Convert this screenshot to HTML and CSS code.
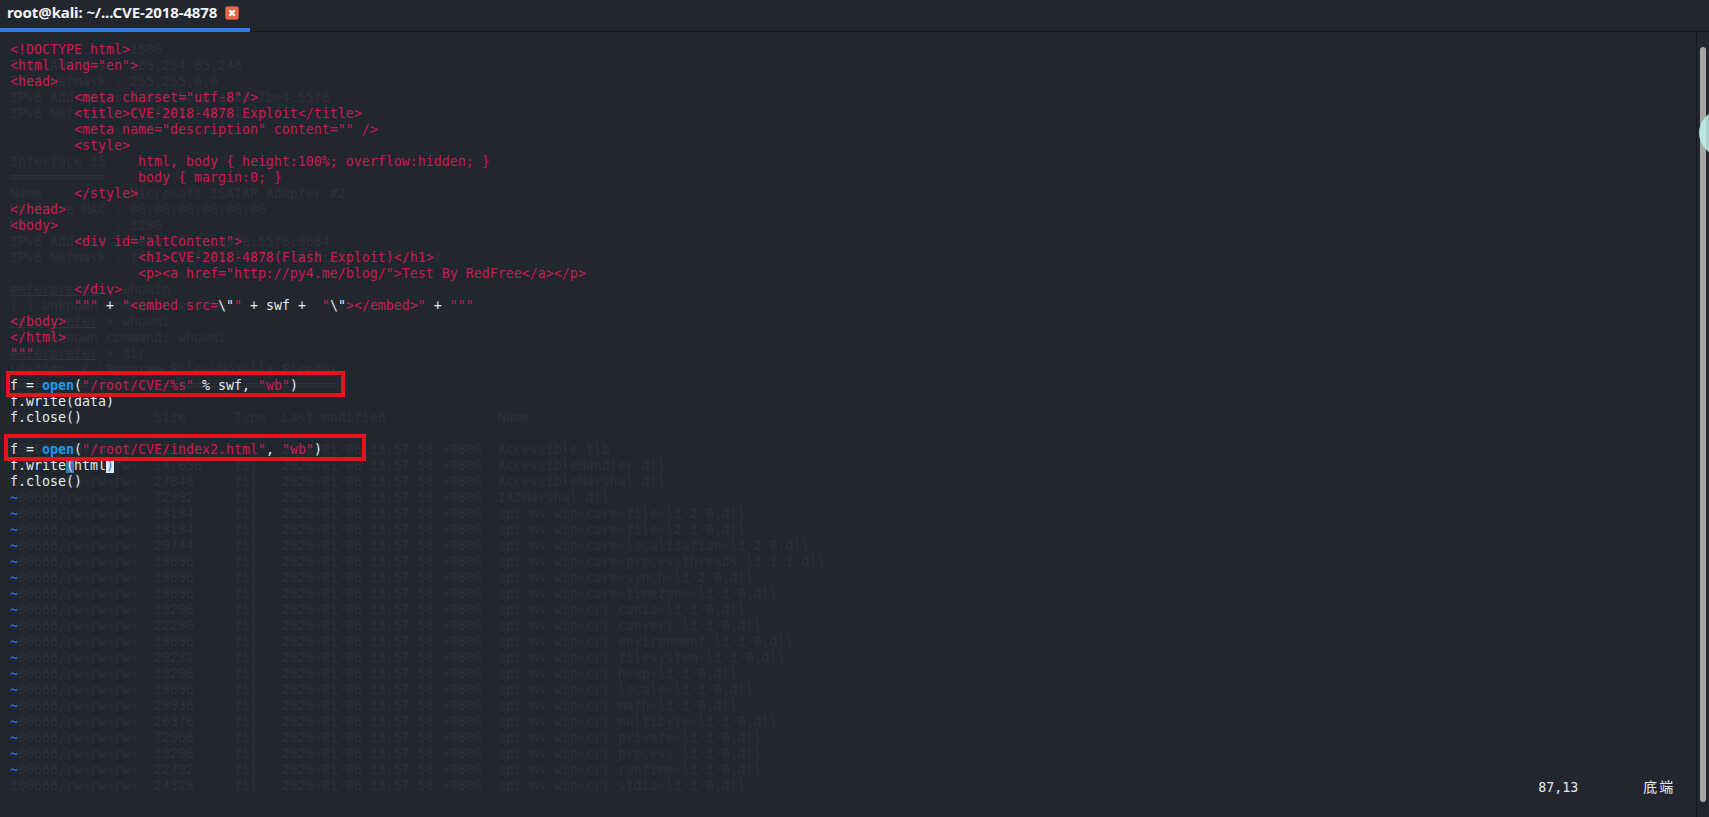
FILE: index.html
```html
<!DOCTYPE html>
<html lang="en">
<head>
<meta charset="utf-8">
<title>root@kali: ~/...CVE-2018-4878</title>
<link rel="stylesheet" href="styles.css">
</head>
<body>
<div class="window">
<header class="tabbar">
<div class="tab">
<span class="tab-title">root@kali: ~/...CVE-2018-4878</span>
<svg class="tab-close" viewBox="0 0 14 14" width="14" height="14"><rect x="0.5" y="0.5" width="13" height="13" rx="2" fill="#e2694a" stroke="#b9482f"/><path d="M4.3 4.3l5.4 5.4M9.7 4.3l-5.4 5.4" stroke="#fff" stroke-width="2.2"/></svg>
</div>
</header>
<main class="body">
<div class="editor">
<pre class="ghost">               1500
IPv4 Address : 169.254.85.246
IPv4 Netmask : 255.255.0.0
IPv6 Address : fe80::5cd8:af80:7be4:55f6
IPv6 Netmask : ffff:ffff:ffff:ffff::


Interface 15
============
Name         : Microsoft ISATAP Adapter #2
Hardware MAC : 00:00:00:00:00:00
MTU          : 1280
IPv6 Address : fe80::5efe:a9fe:55f8:9684
IPv6 Netmask : ffff:ffff:ffff:ffff:ffff:ffff:ffff:ffff

<u>meterpreter</u> &gt; whoaim
<span class="err">[-]</span> Unknown command: whoaim.
<u>meterpreter</u> &gt; whoami
<span class="err">[-]</span> Unknown command: whoami.
<u>meterpreter</u> &gt; dir
Listing: C:\Program Files\Mozilla Firefox
=========================================

Mode              Size      Type  Last modified              Name
----              ----      ----  -------------              ----
100666/rw-rw-rw-  117248    fil   2020-01-06 13:57:58 +0800  Accessible.tlb
100666/rw-rw-rw-  147656    fil   2020-01-06 13:57:58 +0800  AccessibleHandler.dll
100666/rw-rw-rw-  27848     fil   2020-01-06 13:57:58 +0800  AccessibleMarshal.dll
 00666/rw-rw-rw-  72392     fil   2020-01-06 13:57:59 +0800  IA2Marshal.dll
 00666/rw-rw-rw-  18184     fil   2020-01-06 13:57:58 +0800  api-ms-win-core-file-l1-2-0.dll
 00666/rw-rw-rw-  18184     fil   2020-01-06 13:57:58 +0800  api-ms-win-core-file-l2-1-0.dll
 00666/rw-rw-rw-  20744     fil   2020-01-06 13:57:58 +0800  api-ms-win-core-localization-l1-2-0.dll
 00666/rw-rw-rw-  18696     fil   2020-01-06 13:57:58 +0800  api-ms-win-core-processthreads-l1-1-1.dll
 00666/rw-rw-rw-  18696     fil   2020-01-06 13:57:58 +0800  api-ms-win-core-synch-l1-2-0.dll
 00666/rw-rw-rw-  18696     fil   2020-01-06 13:57:58 +0800  api-ms-win-core-timezone-l1-1-0.dll
 00666/rw-rw-rw-  19208     fil   2020-01-06 13:57:58 +0800  api-ms-win-crt-conio-l1-1-0.dll
 00666/rw-rw-rw-  22280     fil   2020-01-06 13:57:58 +0800  api-ms-win-crt-convert-l1-1-0.dll
 00666/rw-rw-rw-  18696     fil   2020-01-06 13:57:58 +0800  api-ms-win-crt-environment-l1-1-0.dll
 00666/rw-rw-rw-  20232     fil   2020-01-06 13:57:58 +0800  api-ms-win-crt-filesystem-l1-1-0.dll
 00666/rw-rw-rw-  19208     fil   2020-01-06 13:57:58 +0800  api-ms-win-crt-heap-l1-1-0.dll
 00666/rw-rw-rw-  18696     fil   2020-01-06 13:57:58 +0800  api-ms-win-crt-locale-l1-1-0.dll
 00666/rw-rw-rw-  28936     fil   2020-01-06 13:57:58 +0800  api-ms-win-crt-math-l1-1-0.dll
 00666/rw-rw-rw-  26376     fil   2020-01-06 13:57:58 +0800  api-ms-win-crt-multibyte-l1-1-0.dll
 00666/rw-rw-rw-  72968     fil   2020-01-06 13:57:58 +0800  api-ms-win-crt-private-l1-1-0.dll
 00666/rw-rw-rw-  19208     fil   2020-01-06 13:57:58 +0800  api-ms-win-crt-process-l1-1-0.dll
 00666/rw-rw-rw-  22792     fil   2020-01-06 13:57:58 +0800  api-ms-win-crt-runtime-l1-1-0.dll
100666/rw-rw-rw-  24328     fil   2020-01-06 13:57:58 +0800  api-ms-win-crt-stdio-l1-1-0.dll</pre>
<pre class="code"><span class="r">&lt;!DOCTYPE html&gt;
&lt;html lang="en"&gt;
&lt;head&gt;
        &lt;meta charset="utf-8"/&gt;
        &lt;title&gt;CVE-2018-4878 Exploit&lt;/title&gt;
        &lt;meta name="description" content="" /&gt;
        &lt;style&gt;
                html, body { height:100%; overflow:hidden; }
                body { margin:0; }
        &lt;/style&gt;
&lt;/head&gt;
&lt;body&gt;
        &lt;div id="altContent"&gt;
                &lt;h1&gt;CVE-2018-4878(Flash Exploit)&lt;/h1&gt;
                &lt;p&gt;&lt;a href="http://py4.me/blog/"&gt;Test By RedFree&lt;/a&gt;&lt;/p&gt;
        &lt;/div&gt;
        """</span> + <span class="r">"&lt;embed src=</span>\"<span class="r">"</span> + swf +  <span class="r">"</span>\"<span class="r">&gt;&lt;/embed&gt;"</span> + <span class="r">"""
&lt;/body&gt;
&lt;/html&gt;
"""</span>

f = <b class="fn">open</b>(<span class="r">"/root/CVE/%s"</span> % swf, <span class="r">"wb"</span>)
f.write(data)
f.close()

f = <b class="fn">open</b>(<span class="r">"/root/CVE/index2.html"</span>, <span class="r">"wb"</span>)
f.write<span class="match">(</span>html<span class="cursor">)</span>
f.close()
<span class="t">~
~
~
~
~
~
~
~
~
~
~
~
~
~
~
~
~
~</span>
<span class="status">                                                                                                                                                                                               87,13        <span class="cjk">底端</span></span></pre>
<div class="mark mark-one"></div>
<div class="mark mark-two"></div>
</div>
<aside class="scroll">
<div class="thumb"></div>
<div class="bubble"></div>
</aside>
</main>
</div>
</body>
</html>
```
FILE: styles.css
```css
* { box-sizing: border-box; }
html, body { margin: 0; height: 100%; overflow: hidden; background: #22262e; }
.window { display: flex; flex-direction: column; height: 817px; }
.tabbar { height: 32px; flex: none; border-bottom: 1px solid #15181d; background: #22262e; }
.tab {
  width: 250px; height: 32px; display: flex; align-items: center; gap: 8px;
  padding: 0 0 3px 7px; border-bottom: 4px solid #2f7bf0;
}
.tab-title { font: 700 15px/1 "Noto Sans", sans-serif; color: #f2f4f5; white-space: nowrap; letter-spacing: -0.1px; }
.tab-close { flex: none; }
.body { flex: 1; display: flex; min-height: 0; }
.editor { position: relative; flex: 1; min-width: 0; border-right: 1px solid #15181d; }
pre { margin: 0; font: 13.29px/16px "DejaVu Sans Mono", monospace; }
.ghost { position: absolute; left: 10px; top: 10px; color: #2d3138; }
.ghost u { text-decoration-thickness: 1px; }
.err { color: #3a2c36; }
.code { position: absolute; left: 10px; top: 10px; color: #e8eaed; }
.r { color: #cc1a50; }
.fn { color: #0d9df5; font-weight: 700; }
.t { color: #2b6fdc; font-weight: 700; }
.match { background: #2f7dbd; }
.cursor { background: #d8ecfa; color: #2f7dbd; }
.status { color: #e8eaed; margin-left: 1px; }
.cjk { font-family: "Noto Sans CJK SC", sans-serif; font-size: 14px; letter-spacing: 2px; margin-left: 1px; }
.mark { position: absolute; border: 4px solid #e8121c; }
.mark-one { left: 6px; top: 339px; width: 339px; height: 26px; }
.mark-two { left: 4px; top: 402px; width: 362px; height: 27px; }
.scroll { position: relative; flex: none; width: 12px; overflow: hidden; }
.thumb { margin: 15px 0 0 3px; width: 6px; height: 755px; border-radius: 3px; background: #a6a6a6; }
.bubble {
  position: absolute; left: 2px; top: 78px; width: 46px; height: 46px; border-radius: 50%;
  background: rgba(190, 240, 235, 0.85);
}
```
